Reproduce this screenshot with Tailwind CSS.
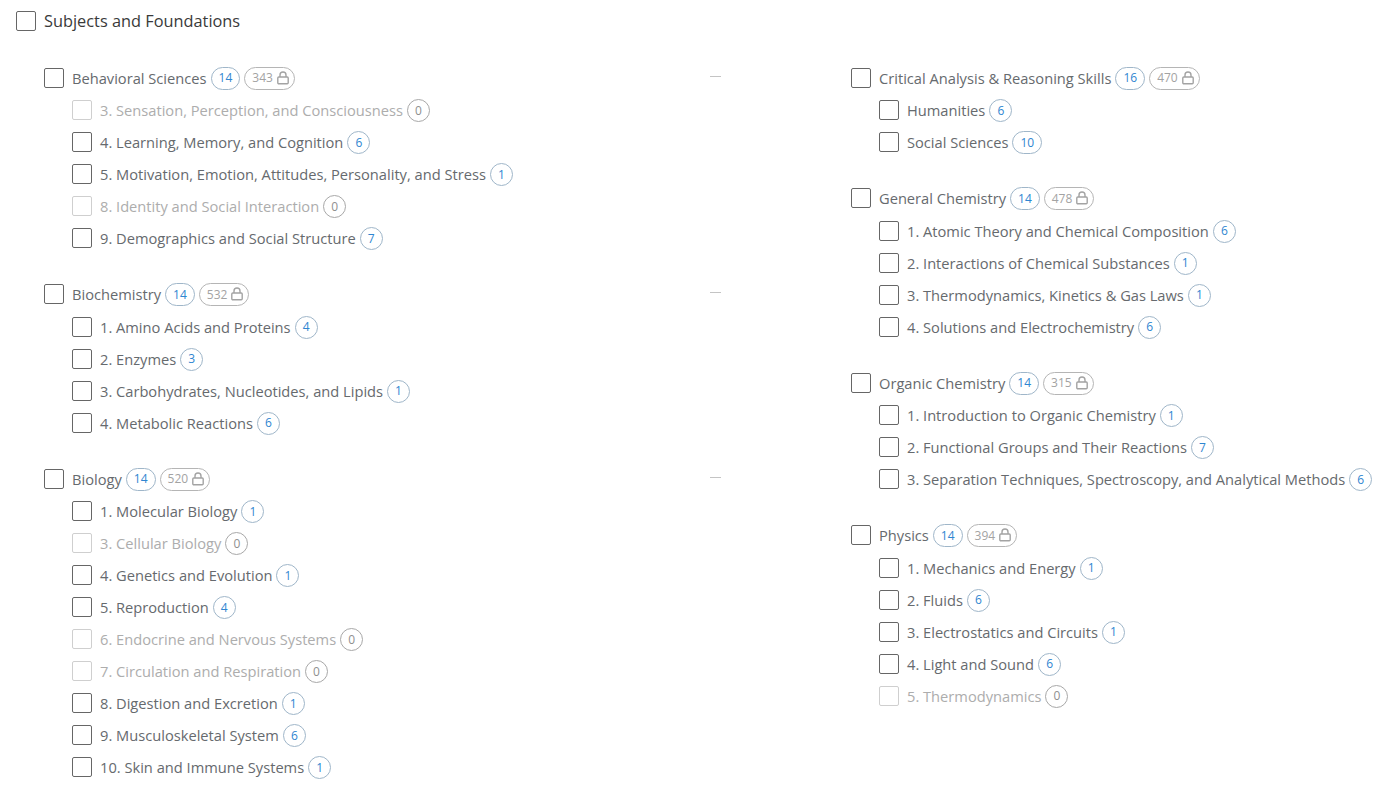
<!DOCTYPE html>
<html lang="en">
<head>
    <meta charset="UTF-8">
    <meta name="viewport" content="width=device-width, initial-scale=1.0">
    <title>Subjects and Foundations</title>
    <script src="https://cdn.jsdelivr.net/npm/@tailwindcss/browser@4"></script>
</head>
<body class="bg-white h-[787px] overflow-hidden font-['Open_Sans',sans-serif] text-[14.67px] text-[#666a6e]">

    <div class="flex items-center gap-2 pl-4 pt-[11px] h-[31px] text-[16.33px] text-[#3a3a3a]">
        <span class="w-5 h-5 border border-[#666] rounded-[2px] shrink-0"></span>
        <span>Subjects and Foundations</span>
    </div>

    <div class="flex pt-[31px]">
        <div id="left" class="w-[851px] shrink-0 pl-11"></div>
        <div id="right" class="flex-1 min-w-0"></div>
    </div>

    <script>
        const left = [
            ["Behavioral Sciences", 14, 343, [
                ["3. Sensation, Perception, and Consciousness", 0],
                ["4. Learning, Memory, and Cognition", 6],
                ["5. Motivation, Emotion, Attitudes, Personality, and Stress", 1],
                ["8. Identity and Social Interaction", 0],
                ["9. Demographics and Social Structure", 7]
            ]],
            ["Biochemistry", 14, 532, [
                ["1. Amino Acids and Proteins", 4],
                ["2. Enzymes", 3],
                ["3. Carbohydrates, Nucleotides, and Lipids", 1],
                ["4. Metabolic Reactions", 6]
            ]],
            ["Biology", 14, 520, [
                ["1. Molecular Biology", 1],
                ["3. Cellular Biology", 0],
                ["4. Genetics and Evolution", 1],
                ["5. Reproduction", 4],
                ["6. Endocrine and Nervous Systems", 0],
                ["7. Circulation and Respiration", 0],
                ["8. Digestion and Excretion", 1],
                ["9. Musculoskeletal System", 6],
                ["10. Skin and Immune Systems", 1]
            ]]
        ];
        const right = [
            ["Critical Analysis & Reasoning Skills", 16, 470, [
                ["Humanities", 6],
                ["Social Sciences", 10]
            ]],
            ["General Chemistry", 14, 478, [
                ["1. Atomic Theory and Chemical Composition", 6],
                ["2. Interactions of Chemical Substances", 1],
                ["3. Thermodynamics, Kinetics & Gas Laws", 1],
                ["4. Solutions and Electrochemistry", 6]
            ]],
            ["Organic Chemistry", 14, 315, [
                ["1. Introduction to Organic Chemistry", 1],
                ["2. Functional Groups and Their Reactions", 7],
                ["3. Separation Techniques, Spectroscopy, and Analytical Methods", 6]
            ]],
            ["Physics", 14, 394, [
                ["1. Mechanics and Energy", 1],
                ["2. Fluids", 6],
                ["3. Electrostatics and Circuits", 1],
                ["4. Light and Sound", 6],
                ["5. Thermodynamics", 0]
            ]]
        ];

        const lock = `<svg class="w-[12px] h-[14px] ml-[4px] -mt-px" viewBox="0 0 12 14" fill="none" stroke="#a3a3a3" stroke-width="1.4"><rect x="0.8" y="6" width="10.4" height="6.8" rx="1"/><path d="M3 6V4a3 3 0 0 1 6 0v2"/></svg>`;

        function countBadge(n) {
            const color = n === 0 ? "text-[#8f8f8f] border-[#a8a8a8]" : "text-[#2f86d1] border-[#9fb6c9]";
            return `<span class="ml-[4px] mt-px min-w-[23px] h-[23px] px-[7px] border rounded-full flex items-center justify-center text-[12px] ${color}">${n}</span>`;
        }

        function row(item) {
            const off = item[1] === 0;
            const box = off ? "border-[#cfcfcf]" : "border-[#666]";
            const text = off ? "text-[#adadad]" : "";
            return `<div class="flex items-center h-8 pl-7 whitespace-nowrap">
                <span class="w-5 h-5 border ${box} rounded-[2px] shrink-0 mr-2"></span>
                <span class="${text}">${item[0].replace("&", "&amp;")}</span>
                ${countBadge(item[1])}
            </div>`;
        }

        function group(g, showDash) {
            const dash = showDash ? `<span class="absolute left-[666px] top-[14px] w-[11px] h-px bg-[#c4c4c4]"></span>` : "";
            return `<div class="mb-6">
                <div class="relative flex items-center h-[32.4px] pb-[0.6px] whitespace-nowrap">
                    <span class="w-5 h-5 border border-[#666] rounded-[2px] shrink-0 mr-2"></span>
                    <span>${g[0].replace("&", "&amp;")}</span>
                    <span class="ml-[4px] mt-px h-[23px] px-[7px] border border-[#9fb6c9] rounded-full flex items-center text-[12px] text-[#2f86d1]">${g[1]}</span>
                    <span class="ml-[4px] mt-px h-[23px] pl-[7px] pr-[5px] border border-[#b5b5b5] rounded-full flex items-center text-[12px] text-[#a3a3a3]">${g[2]}${lock}</span>
                    ${dash}
                </div>
                ${g[3].map(row).join("")}
            </div>`;
        }

        document.getElementById("left").innerHTML = left.map(g => group(g, true)).join("");
        document.getElementById("right").innerHTML = right.map(g => group(g, false)).join("");
    </script>

</body>
</html>
